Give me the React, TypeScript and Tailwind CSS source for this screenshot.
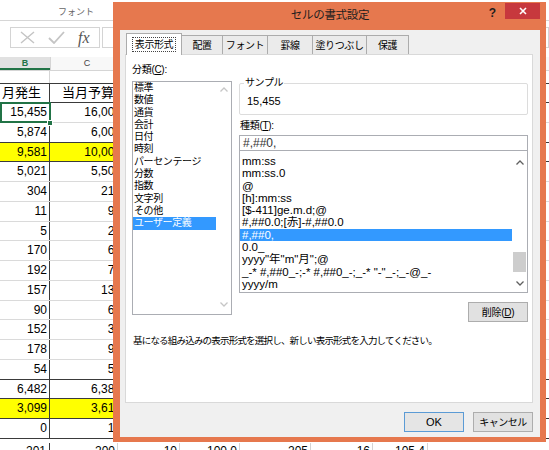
import React from "react";

const jp = "font-['Liberation_Sans','Noto_Sans_CJK_JP',sans-serif]";

type Row = { b: string; c: string; yellow?: boolean; dark?: boolean };

const rows: Row[] = [
  { b: "15,455", c: "16,000" },
  { b: "5,874", c: "6,000", dark: true },
  { b: "9,581", c: "10,000", yellow: true, dark: true },
  { b: "5,021", c: "5,500" },
  { b: "304", c: "210" },
  { b: "11", c: "90" },
  { b: "5", c: "20" },
  { b: "170", c: "60" },
  { b: "192", c: "70" },
  { b: "157", c: "130" },
  { b: "90", c: "60" },
  { b: "152", c: "30" },
  { b: "178", c: "90" },
  { b: "54", c: "50", dark: true },
  { b: "6,482", c: "6,380", dark: true },
  { b: "3,099", c: "3,610", yellow: true, dark: true },
  { b: "0", c: "10", dark: true },
];

const categories = [
  "標準",
  "数値",
  "通貨",
  "会計",
  "日付",
  "時刻",
  "パーセンテージ",
  "分数",
  "指数",
  "文字列",
  "その他",
  "ユーザー定義",
];

const formats = [
  "mm:ss",
  "mm:ss.0",
  "@",
  "[h]:mm:ss",
  "[$-411]ge.m.d;@",
  "#,##0.0;[赤]-#,##0.0",
  "#,##0,",
  "0.0_",
  'yyyy"年"m"月";@',
  '_-* #,##0_-;-* #,##0_-;_-* "-"_-;_-@_-',
  "yyyy/m",
];

function Chevron({ up, color }: { up?: boolean; color: string }) {
  return (
    <svg width="8" height="5" viewBox="0 0 8 5">
      <polyline
        points={up ? "0.5,4.5 4,1 7.5,4.5" : "0.5,0.5 4,4 7.5,0.5"}
        fill="none"
        stroke={color}
        strokeWidth="1.3"
      />
    </svg>
  );
}

function Sheet() {
  return (
    <div className="text-[12px] text-black">
      {/* ribbon group label */}
      <div className="h-[21px] border-b border-[#d6d6d6] pl-[58px] pt-[7px] text-[9px] leading-[10px] text-[#666]">
        フォント
      </div>

      {/* formula bar */}
      <div className="h-[36px] pt-[6px] flex">
        <div className="ml-[10px] w-[90px] h-[21px] border border-[#d4d4d4] flex items-center justify-around px-[3px]">
          <svg width="15" height="13" viewBox="0 0 15 13">
            <path d="M1 1 L14 12 M14 1 L1 12" stroke="#c4c4c4" strokeWidth="1.4" />
          </svg>
          <svg width="17" height="13" viewBox="0 0 17 13">
            <path d="M1 7 L6 12 L16 1" fill="none" stroke="#c4c4c4" strokeWidth="1.8" />
          </svg>
          <span className="font-['Liberation_Serif',serif] italic text-[16px] leading-[16px] text-[#555]">
            fx
          </span>
        </div>
        <div className="ml-[2px] flex-1 h-[21px] border border-[#d4d4d4]" />
      </div>

      {/* column headers */}
      <div className="flex h-[14px] bg-[#f8f8f8] border-b border-[#d5d5d5] text-[9px] leading-[13px]">
        <div className="w-[50px] shrink-0 bg-[#e1e1e1] border-b-2 border-[#217346] text-[#217346] font-bold text-center">
          B
        </div>
        <div className="w-[74px] shrink-0 border-l border-r border-[#d5d5d5] text-center text-[#444]">
          C
        </div>
        <div className="flex-1" />
      </div>

      {/* blank row */}
      <div className="flex h-[13px] border-b border-[#3a3a3a]">
        <div className="w-[50px] shrink-0 border-r border-[#d5d5d5]" />
        <div className="w-[74px] shrink-0 border-r border-[#d5d5d5]" />
      </div>

      {/* header row */}
      <div className={`flex h-[19px] border-b border-[#3a3a3a] ${jp} text-[13px] leading-[18px]`}>
        <div className="w-[50px] shrink-0 border-r border-[#3a3a3a] pl-[2px] overflow-hidden whitespace-nowrap">
          月発生
        </div>
        <div className="w-[74px] shrink-0 border-r border-[#3a3a3a] pl-[12px] overflow-hidden whitespace-nowrap">
          当月予算
        </div>
      </div>

      {/* data rows */}
      <div className="relative font-['Liberation_Sans',sans-serif]">
        {rows.map((r, i) => (
          <div
            key={i}
            className={`flex h-[19.75px] leading-[19px] border-b ${r.dark ? "border-[#3a3a3a]" : "border-[#dadada]"}`}
          >
            <div
              className={`w-[50px] shrink-0 border-r border-[#3a3a3a] text-right pr-[2px] ${r.yellow ? "bg-[#ffff00]" : ""}`}
            >
              {r.b}
            </div>
            <div
              className={`w-[74px] shrink-0 border-r border-[#3a3a3a] text-right pr-[2px] ${r.yellow ? "bg-[#ffff00]" : ""}`}
            >
              {r.c}
            </div>
            <div className="flex-1" />
          </div>
        ))}
        {/* selection */}
        <div className="absolute left-0 top-[-1px] w-[51px] h-[21px] border-2 border-[#217346]" />
        <div className="absolute left-[47px] top-[17px] w-[6px] h-[6px] bg-[#217346] border border-white" />

        {/* next row, mostly hidden behind the dialog */}
        <div className="flex h-[19.75px] pt-[4px] leading-[16px] text-right">
          <div className="w-[50px] shrink-0 border-r border-[#3a3a3a] pr-[3px]">201</div>
          <div className="w-[68px] shrink-0 border-r border-[#d4d4d4] pr-[2px]">200</div>
          <div className="w-[62px] shrink-0 border-r border-[#d4d4d4] pr-[2px]">10</div>
          <div className="w-[60px] shrink-0 border-r border-[#d4d4d4] pr-[2px]">100.0</div>
          <div className="w-[71px] shrink-0 border-r border-[#d4d4d4] pr-[2px]">205</div>
          <div className="w-[62px] shrink-0 border-r border-[#d4d4d4] pr-[2px]">16</div>
          <div className="w-[55px] shrink-0 border-r border-[#d4d4d4] pr-[2px]">105.4</div>
        </div>
      </div>
    </div>
  );
}

function Tab({ label, w, active }: { label: string; w: string; active?: boolean }) {
  if (active) {
    return (
      <div
        className={`${w} h-[22px] -mb-px relative z-10 bg-white border border-b-0 border-[#acacac] flex items-center justify-center`}
      >
        <span className="border border-dotted border-[#444] px-[2px] leading-[13px]">{label}</span>
      </div>
    );
  }
  return (
    <div
      className={`${w} h-[19px] -ml-px bg-[#ebebeb] border border-b-0 border-[#acacac] flex items-center justify-center leading-[13px]`}
    >
      {label}
    </div>
  );
}

function Dialog() {
  return (
    <div
      className={`absolute left-[113px] top-[2px] w-[433px] h-[440px] bg-[#e6784e] flex flex-col pl-[7px] pr-[6px] pb-[5px] ${jp} text-black`}
    >
      {/* title bar */}
      <div className="h-[28px] relative flex items-center justify-center shrink-0">
        <span className="text-[11.5px] tracking-[-0.3px] text-[#1e1e1e]">セルの書式設定</span>
        <span className="absolute right-[44px] top-[4px] text-[12px] leading-[14px] font-bold text-[#1e1e1e]">
          ?
        </span>
        <div className="absolute right-0 top-[1px] w-[35px] h-[16px] bg-[#c7383d] flex items-center justify-center">
          <svg width="8" height="8" viewBox="0 0 8 8">
            <path d="M1 1 L7 7 M7 1 L1 7" stroke="white" strokeWidth="1.6" />
          </svg>
        </div>
      </div>

      {/* body */}
      <div className="flex-1 bg-[#f0f0f0] pl-[5px] pr-[7px] pt-[3px] flex flex-col">
        {/* tabs */}
        <div className="h-[21px] flex items-end pl-[1px] text-[10px] tracking-[-0.4px]">
          <Tab label="表示形式" w="w-[56px]" active />
          <Tab label="配置" w="w-[42px]" />
          <Tab label="フォント" w="w-[46px]" />
          <Tab label="罫線" w="w-[46px]" />
          <Tab label="塗りつぶし" w="w-[55px]" />
          <Tab label="保護" w="w-[43px]" />
        </div>

        {/* panel */}
        <div className="h-[349px] bg-white border border-[#d9d9d9] flex flex-col pl-[6px] pr-[4px]">
          <div className="flex gap-[7px]">
            {/* left column */}
            <div className="w-[100px] shrink-0 pt-[8px]">
              <div className="h-[14px] leading-[14px] text-[10px] tracking-[-0.3px]">
                分類(<span className="underline">C</span>):
              </div>
              <div className="mt-[4px] h-[234px] border border-[#abadb3] bg-white flex">
                <div className="flex-1 flex flex-col">
                  {categories.map((c, i) => (
                    <div
                      key={c}
                      className={`h-[12.3px] leading-[12.3px] pl-[1px] text-[10px] tracking-[-0.4px] whitespace-nowrap ${
                        i === 11 ? "bg-[#3399ff] text-white" : "text-black"
                      }`}
                    >
                      {c}
                    </div>
                  ))}
                </div>
                <div className="w-[15px] shrink-0 flex flex-col items-center justify-between pt-[5px] pb-[7px]">
                  <Chevron up color="#c6c6c6" />
                  <Chevron color="#c6c6c6" />
                </div>
              </div>
            </div>

            {/* right column */}
            <div className="w-[289px] shrink-0 pt-[22px] flex flex-col">
              <fieldset className="h-[38px] border border-[#dcdcdc] rounded-[2px] pl-[7px]">
                <legend className="ml-[-3px] px-[1px] text-[10px] leading-[12px] tracking-[-0.4px]">
                  サンプル
                </legend>
                <div className="pt-[5px] text-[11px] leading-[14px]">15,455</div>
              </fieldset>

              <div className="mt-[4px] h-[14px] leading-[14px] text-[10px] tracking-[-0.3px] pl-[1px]">
                種類(<span className="underline">T</span>):
              </div>
              <div className="mt-[2px] h-[16px] border border-[#abadb3] bg-white pl-[3px] text-[12px] leading-[14px] text-[#333]">
                #,##0,
              </div>
              <div className="h-[142px] border border-t-0 border-[#abadb3] bg-white flex">
                <div className="flex-1 flex flex-col pt-[4px] text-[11.5px]">
                  {formats.map((f, i) => (
                    <div
                      key={f}
                      className={`h-[12.3px] leading-[12.3px] pl-[2px] whitespace-nowrap ${
                        i === 6 ? "bg-[#3399ff] text-white" : "text-black"
                      }`}
                    >
                      {f}
                    </div>
                  ))}
                </div>
                <div className="w-[15px] shrink-0 flex flex-col">
                  <div className="h-[18px] flex items-center justify-center pt-[5px]">
                    <Chevron up color="#606060" />
                  </div>
                  <div className="flex-1">
                    <div className="mt-[83px] mx-[1px] h-[20px] bg-[#cdcdcd]" />
                  </div>
                  <div className="h-[17px] flex items-center justify-center">
                    <Chevron color="#606060" />
                  </div>
                </div>
              </div>
              <div className="mt-[9px] self-end w-[60px] h-[20px] bg-[#e1e1e1] border border-[#adadad] flex items-center justify-center text-[10px] tracking-[-0.3px]">
                削除(<span className="underline">D</span>)
              </div>
            </div>
          </div>

          <div className="mt-[12px] pl-[1px] text-[9.5px] leading-[14px] tracking-[-0.8px] whitespace-nowrap">
            基になる組み込みの表示形式を選択し、新しい表示形式を入力してください。
          </div>
        </div>

        {/* buttons */}
        <div className="flex justify-end gap-[9px] mt-[9px] text-[10px]">
          <div className="w-[60px] h-[20px] bg-[#e5e5e5] border border-[#5b9bd5] flex items-center justify-center text-[11px]">
            OK
          </div>
          <div className="w-[60px] h-[20px] bg-[#e1e1e1] border border-[#adadad] flex items-center justify-center tracking-[-0.5px]">
            キャンセル
          </div>
        </div>
      </div>
    </div>
  );
}

export default function App() {
  return (
    <div className={`relative w-[549px] h-[450px] overflow-hidden bg-white ${jp}`}>
      <Sheet />
      <Dialog />
    </div>
  );
}
